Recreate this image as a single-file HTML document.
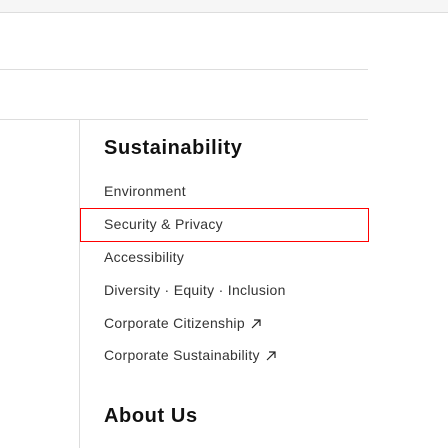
<!DOCTYPE html>
<html><head><style>
body{margin:0;width:448px;height:448px;position:relative;background:#fff;font-family:"Liberation Sans",sans-serif;overflow:hidden}
.a{position:absolute}
.t{position:absolute;left:104px;font-size:14px;color:#333;white-space:nowrap;line-height:18px;letter-spacing:0.3px}
.h{position:absolute;left:104px;font-size:20px;font-weight:bold;color:#111;line-height:22px;letter-spacing:0.6px}
.arr{display:inline-block;margin-left:6px;vertical-align:-1px}
</style></head><body>
<div class="a" style="left:0;top:0;width:448px;height:12px;background:#f6f6f6;border-bottom:1px solid #ddd"></div>
<div class="a" style="left:0;top:69px;width:368px;height:1px;background:#ddd"></div>
<div class="a" style="left:0;top:119px;width:368px;height:1px;background:#ddd"></div>
<div class="a" style="left:79px;top:120px;width:1px;height:328px;background:#ddd"></div>
<div class="h" style="top:137px">Sustainability</div>
<div class="t" style="top:182px">Environment</div>
<div class="a" style="left:80px;top:208px;width:287px;height:32px;border:1px solid #f00"></div>
<div class="t" style="top:215px">Security &amp; Privacy</div>
<div class="t" style="top:248px">Accessibility</div>
<div class="t" style="top:281px">Diversity · Equity · Inclusion</div>
<div class="t" style="top:314px">Corporate Citizenship<svg class="arr" width="10" height="10" viewBox="0 0 10 10"><path d="M1 9L9 1M3 1H9V7" stroke="#222" stroke-width="1.2" fill="none"/></svg></div>
<div class="t" style="top:346px">Corporate Sustainability<svg class="arr" width="10" height="10" viewBox="0 0 10 10"><path d="M1 9L9 1M3 1H9V7" stroke="#222" stroke-width="1.2" fill="none"/></svg></div>
<div class="h" style="top:405px">About Us</div>
</body></html>
